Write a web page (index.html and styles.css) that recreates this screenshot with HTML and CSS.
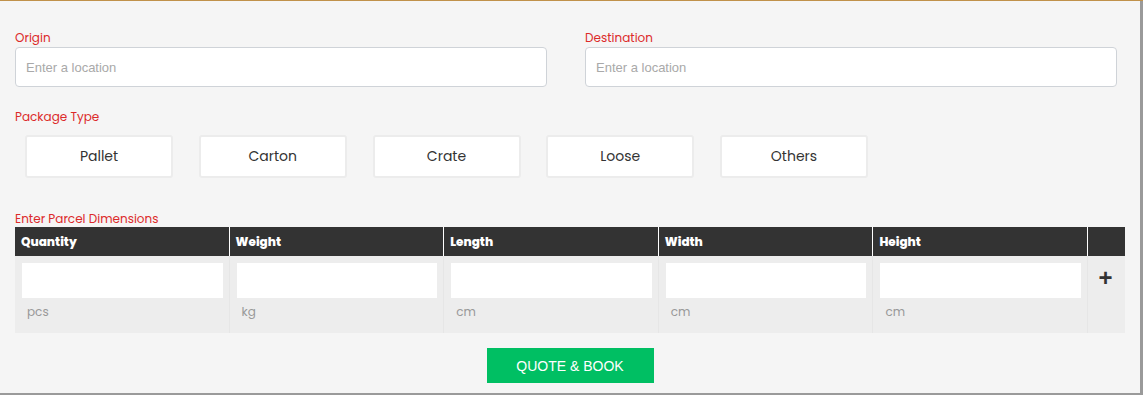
FILE: index.html
```html
<!DOCTYPE html>
<html lang="en">
  <head>
    <meta charset="UTF-8" />
    <meta name="viewport" content="width=device-width, initial-scale=1.0" />
    <title>Quote Form</title>
    <link rel="stylesheet" href="styles.css">
  </head>
  <body>
    <div class="quote-panel">
      <div class="location-row">
        <div class="form-group">
          <label for="origin">Origin</label>
          <input type="text" id="origin" class="location-input" placeholder="Enter a location" />
        </div>
        <div class="form-group">
          <label for="destination">Destination</label>
          <input type="text" id="destination" class="location-input" placeholder="Enter a location" />
        </div>
      </div>

      <div class="section-label">Package Type</div>
      <div class="package-types">
        <button class="package-btn">Pallet</button>
        <button class="package-btn">Carton</button>
        <button class="package-btn">Crate</button>
        <button class="package-btn">Loose</button>
        <button class="package-btn">Others</button>
      </div>

      <div class="section-label dims-label">Enter Parcel Dimensions</div>
      <div class="dims-table">
        <div class="dims-head">Quantity</div>
        <div class="dims-head">Weight</div>
        <div class="dims-head">Length</div>
        <div class="dims-head">Width</div>
        <div class="dims-head">Height</div>
        <div class="dims-head"></div>

        <div class="dims-cell">
          <input type="text" class="dims-input" />
          <span class="unit">pcs</span>
        </div>
        <div class="dims-cell">
          <input type="text" class="dims-input" />
          <span class="unit">kg</span>
        </div>
        <div class="dims-cell">
          <input type="text" class="dims-input" />
          <span class="unit">cm</span>
        </div>
        <div class="dims-cell">
          <input type="text" class="dims-input" />
          <span class="unit">cm</span>
        </div>
        <div class="dims-cell">
          <input type="text" class="dims-input" />
          <span class="unit">cm</span>
        </div>
        <div class="dims-cell add-cell">
          <span class="add-row">+</span>
        </div>
      </div>

      <div class="submit-row">
        <button class="submit-btn">QUOTE &amp; BOOK</button>
      </div>
    </div>
  </body>
</html>
```

FILE: styles.css
```css
body {
  margin: 0;
  background: linear-gradient(to bottom, #c0914a 0, #c0914a 1px, #9a9a9a 1px);
  font-family: "Poppins", "Open Sans", sans-serif;
  height: 395px;
  overflow: hidden;
}
.quote-panel {
  width: 1140px;
  height: 392px;
  margin-top: 1px;
  background-color: #f5f5f5;
  box-sizing: border-box;
  padding: 29px 15px 0 15px;
}
.location-row {
  display: grid;
  grid-template-columns: 532px 532px;
  column-gap: 38px;
}
label,
.section-label {
  display: block;
  color: #dc2a2a;
  font-size: 12px;
  line-height: 16px;
  margin-bottom: 1px;
}
.location-input {
  display: block;
  width: 100%;
  height: 40px;
  box-sizing: border-box;
  border: 1px solid #cfd3d8;
  border-radius: 4px;
  background: #fff;
  padding: 0 10px;
  font-family: "Liberation Sans", Arial, sans-serif;
  font-size: 13px;
}
.location-input::placeholder {
  color: #a9a9a9;
}
.section-label {
  margin-top: 22px;
  margin-bottom: 10px;
}
.package-types {
  display: flex;
  gap: 25.75px;
  padding-left: 10px;
}
.package-btn {
  width: 148px;
  height: 43px;
  padding-top: 1px;
  background: #fff;
  border: 2px solid #ececec;
  border-radius: 3px;
  font-family: "Poppins", "Open Sans", sans-serif;
  font-size: 14px;
  color: #333;
}
.dims-label {
  margin-top: 33px;
  margin-bottom: 0;
}
.dims-table {
  display: grid;
  grid-template-columns: repeat(5, 1fr) 37px;
  width: 1110px;
}
.dims-head {
  background-color: #333;
  color: #fff;
  height: 29px;
  line-height: 29px;
  padding-left: 6px;
  font-size: 12px;
  font-weight: 800;
  border-right: 1px solid #fff;
}
.dims-head:nth-child(6) {
  border-right: none;
}
.dims-cell {
  background-color: #ededed;
  height: 77px;
  box-sizing: border-box;
  padding: 7px 6px 0 7px;
  border-right: 1px solid #e6e6e6;
}
.dims-input {
  display: block;
  width: 100%;
  height: 35px;
  box-sizing: border-box;
  border: none;
  background: #fff;
}
.unit {
  display: block;
  margin-top: 5px;
  padding-left: 5px;
  font-size: 12px;
  color: #999;
}
.add-cell {
  border-right: none;
  text-align: center;
  padding: 8px 2px 0 0;
}
.add-row {
  font-family: "Liberation Sans", Arial, sans-serif;
  font-size: 24px;
  font-weight: bold;
  color: #333;
}
.submit-row {
  display: flex;
  justify-content: center;
  margin-top: 15px;
}
.submit-btn {
  width: 167px;
  height: 35px;
  border: none;
  background-color: #00bf63;
  color: #fff;
  font-family: "Liberation Sans", Arial, sans-serif;
  font-size: 14px;
}
```
